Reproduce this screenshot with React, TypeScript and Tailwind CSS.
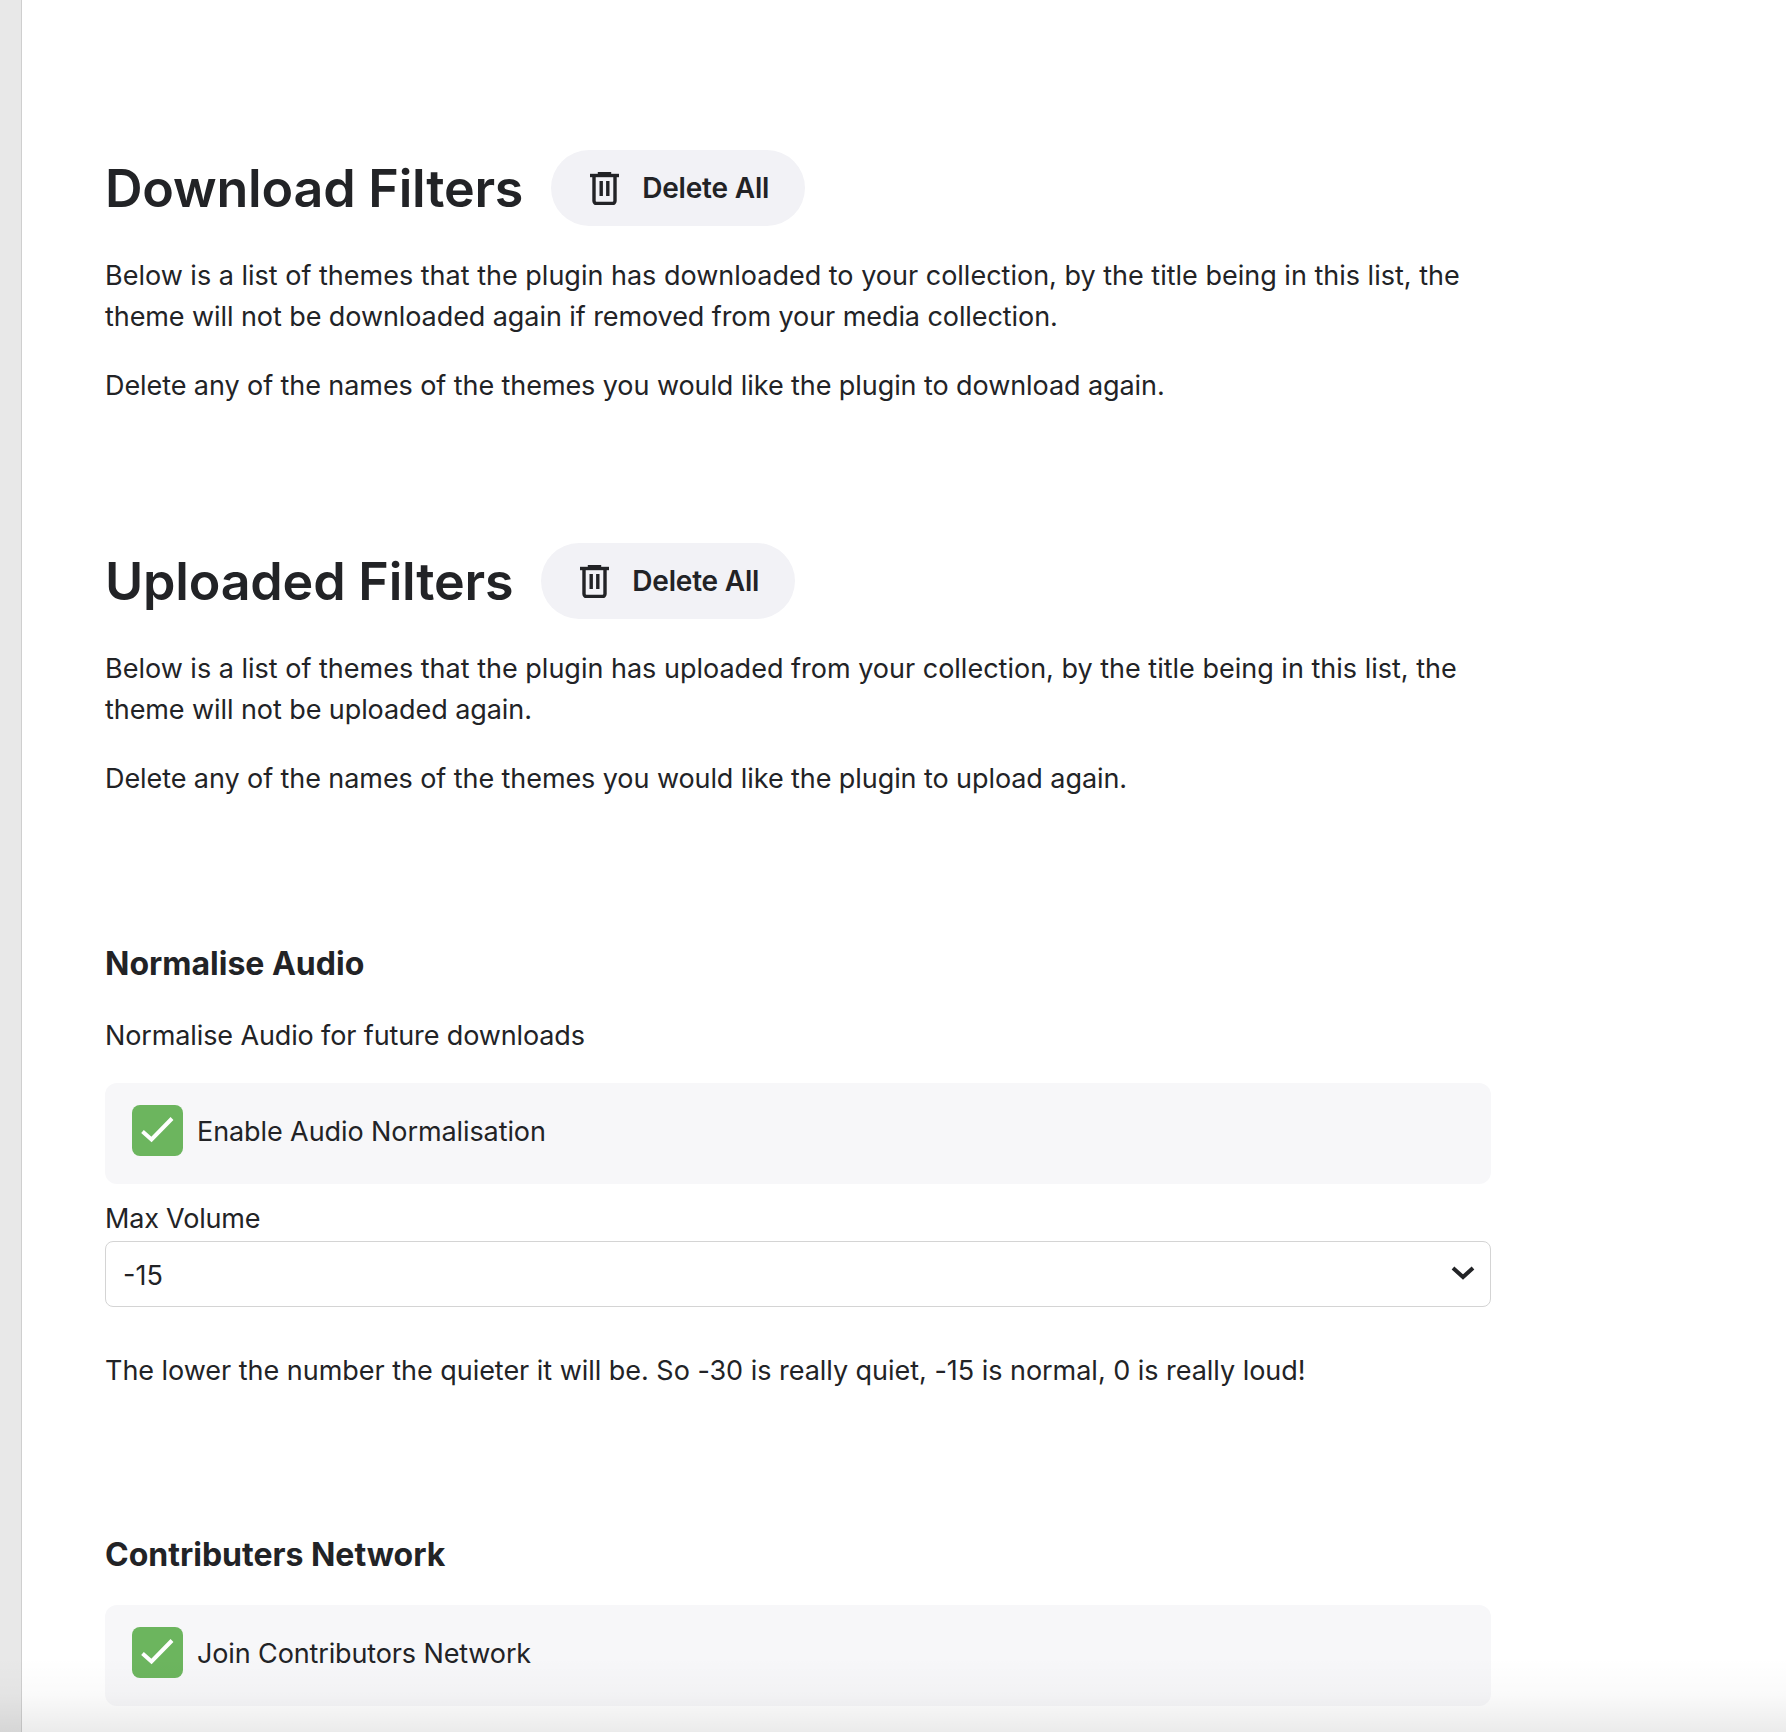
import React from "react";

function TrashIcon() {
    return (
        <svg width="29" height="33" viewBox="0 0 29 33" fill="none" stroke="#222326" strokeWidth="3.4" className="shrink-0">
            <path d="M0 3.5h29" />
            <path d="M9 3V1h11v2" strokeWidth="2.4" />
            <path d="M4 4v25a2.5 2.5 0 0 0 2.5 2.5h16a2.5 2.5 0 0 0 2.5-2.5V4" />
            <path d="M11.2 9v15M17.8 9v15" />
        </svg>
    );
}

function CheckBox() {
    return (
        <div className="w-[51px] h-[51px] rounded-lg bg-[#6cb55e] shrink-0">
            <svg width="51" height="51" viewBox="0 0 51 51" fill="none" stroke="#fff" strokeWidth="4">
                <path d="M10.5 26.5 19.5 34.5 40 13.5" />
            </svg>
        </div>
    );
}

function CheckRow({ label, tracking }: { label: string; tracking: string }) {
    return (
        <div className="h-[101px] rounded-xl bg-[#f7f7f9] pl-[27px] pb-[6px] flex items-center gap-[14px]">
            <CheckBox />
            <span className={`pt-[2px] ${tracking}`}>{label}</span>
        </div>
    );
}

function FilterSection({ title, first, second }: { title: string; first: string[]; second: string }) {
    return (
        <section>
            <div className="flex items-center gap-7 h-[76px]">
                <h1 className="pt-[2px] text-[52px] leading-[76px] font-semibold tracking-[-0.2px] text-[#222326]">{title}</h1>
                <button className="h-[76px] pl-[39px] pr-[36px] rounded-full bg-[#f2f2f6] flex items-center gap-[23px] text-[28px] font-semibold tracking-[-0.2px] text-[#222326]">
                    <TrashIcon />
                    Delete All
                </button>
            </div>
            <p className="mt-[29px]">
                {first[0]}
                <br />
                <span className="tracking-[-0.08px]">{first[1]}</span>
            </p>
            <p className="mt-[28px] tracking-[-0.08px]">{second}</p>
        </section>
    );
}

export default function App() {
    return (
        <div className="relative h-[1732px] overflow-hidden flex bg-white font-['Inter',sans-serif] text-[27px] leading-[41px] text-[#222326]">
            <div className="w-[22px] shrink-0 bg-[#e8e8e8] border-r border-[#cfcfcf]" />
            <main className="w-[1386px] ml-[83px] pt-[150px]">
                <FilterSection
                    title="Download Filters"
                    first={[
                        "Below is a list of themes that the plugin has downloaded to your collection, by the title being in this list, the",
                        "theme will not be downloaded again if removed from your media collection.",
                    ]}
                    second="Delete any of the names of the themes you would like the plugin to download again."
                />
                <div className="mt-[137px]">
                    <FilterSection
                        title="Uploaded Filters"
                        first={[
                            "Below is a list of themes that the plugin has uploaded from your collection, by the title being in this list, the",
                            "theme will not be uploaded again.",
                        ]}
                        second="Delete any of the names of the themes you would like the plugin to upload again."
                    />
                </div>

                <h2 className="mt-[144px] text-[32px] leading-[41px] font-bold">Normalise Audio</h2>
                <p className="mt-[31px] tracking-[-0.12px]">Normalise Audio for future downloads</p>
                <div className="mt-[27px]">
                    <CheckRow label="Enable Audio Normalisation" tracking="tracking-[-0.09px]" />
                </div>
                <label className="block mt-[14px] tracking-[-0.2px]">Max Volume</label>
                <div className="mt-[2px] h-[66px] rounded-lg border border-[#d4d4d4] pl-[17px] pr-[15px] flex items-center justify-between">
                    <span className="pt-[2px]">-15</span>
                    <svg width="24" height="16" viewBox="0 0 24 16" fill="none" stroke="#222326" strokeWidth="4" className="-mt-[2px]">
                        <path d="M2 3 12 12 22 3" />
                    </svg>
                </div>
                <p className="mt-[43px] tracking-[-0.03px]">The lower the number the quieter it will be. So -30 is really quiet, -15 is normal, 0 is really loud!</p>

                <h2 className="mt-[143px] text-[32px] leading-[41px] font-bold">Contributers Network</h2>
                <div className="mt-[30px]">
                    <CheckRow label="Join Contributors Network" tracking="tracking-[-0.13px]" />
                </div>
            </main>
            <div className="absolute left-0 right-0 bottom-0 h-[75px] bg-gradient-to-b from-transparent via-[#00000005] to-[#00000014]" />
        </div>
    );
}
